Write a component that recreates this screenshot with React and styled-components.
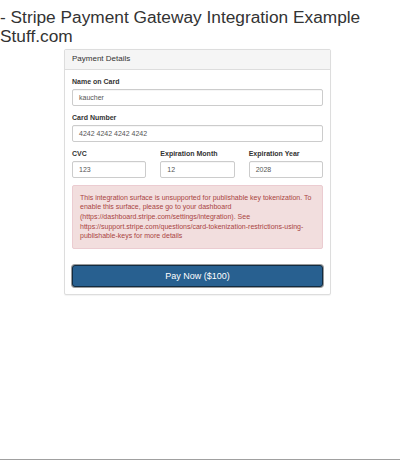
import React from "react";
import styled, { createGlobalStyle } from "styled-components";

const Global = createGlobalStyle`
  html, body { margin: 0; padding: 0; background: #fff; }
  body { font-family: "Liberation Sans", Arial, sans-serif; color: #333; }
  * { box-sizing: border-box; }
`;

const Page = styled.div`
  height: 460px;
  display: flex;
  flex-direction: column;
  overflow: hidden;
`;

const Title = styled.h1`
  margin: 8px 0 3px 0;
  font-size: 17.3px;
  line-height: 19px;
  font-weight: 400;
  color: #333;
  white-space: nowrap;
`;

const Panel = styled.div`
  margin: 0 0 0 64px;
  width: 267px;
  border: 1px solid #ddd;
  border-radius: 2px;
  box-shadow: 0 0.5px 1px rgba(0, 0, 0, 0.05);
  background: #fff;
`;

const PanelHeading = styled.div`
  background: #f5f5f5;
  border-bottom: 1px solid #ddd;
  padding: 5px 7px;
  font-size: 8px;
  line-height: 8.8px;
  color: #333;
`;

const PanelBody = styled.form`
  padding: 7px;
  display: flex;
  flex-direction: column;
`;

const Group = styled.div`
  display: flex;
  flex-direction: column;
  margin-bottom: 7px;
`;

const Row = styled.div`
  display: grid;
  grid-template-columns: repeat(3, 1fr);
  column-gap: 14px;
`;

const Label = styled.label`
  font-size: 7px;
  line-height: 10px;
  font-weight: 700;
  color: #333;
  margin-bottom: 2px;
`;

const Input = styled.div`
  height: 17px;
  padding: 0 6px;
  display: flex;
  align-items: center;
  font-size: 7px;
  color: #555;
  background: #fff;
  border: 1px solid #ccc;
  border-radius: 2px;
  box-shadow: inset 0 0.5px 0.5px rgba(0, 0, 0, 0.075);
`;

const Alert = styled.div`
  padding: 7px;
  border: 1px solid #ebccd1;
  border-radius: 2px;
  background: #f2dede;
  color: #a94442;
  font-size: 7px;
  line-height: 9.6px;
  margin-bottom: 16px;
`;

const PayButton = styled.button`
  height: 22px;
  margin: 0;
  padding: 0;
  font-family: "Liberation Sans", Arial, sans-serif;
  font-size: 9px;
  color: #fff;
  background: #286090;
  border: 1px solid #122b40;
  border-radius: 3px;
  box-shadow: 0 0 0 1px #9a9a9a;
  cursor: pointer;
`;

const BottomLine = styled.div`
  margin-top: auto;
  height: 1px;
  background: #a0a0a0;
`;

export default function App() {
  return (
    <Page>
      <Global />
      <Title>
        - Stripe Payment Gateway Integration Example
        <br />
        Stuff.com
      </Title>
      <Panel>
        <PanelHeading>Payment Details</PanelHeading>
        <PanelBody onSubmit={(e) => e.preventDefault()}>
          <Group>
            <Label>Name on Card</Label>
            <Input>kaucher</Input>
          </Group>
          <Group>
            <Label>Card Number</Label>
            <Input>4242 4242 4242 4242</Input>
          </Group>
          <Row>
            <Group>
              <Label>CVC</Label>
              <Input>123</Input>
            </Group>
            <Group>
              <Label>Expiration Month</Label>
              <Input>12</Input>
            </Group>
            <Group>
              <Label>Expiration Year</Label>
              <Input>2028</Input>
            </Group>
          </Row>
          <Alert>
            This integration surface is unsupported for publishable key
            tokenization. To enable this surface, please go to your dashboard
            (https://dashboard.stripe.com/settings/integration). See
            https://support.stripe.com/questions/card-tokenization-restrictions-using-publishable-keys
            for more details
          </Alert>
          <PayButton type="submit">Pay Now ($100)</PayButton>
        </PanelBody>
      </Panel>
      <BottomLine />
    </Page>
  );
}
